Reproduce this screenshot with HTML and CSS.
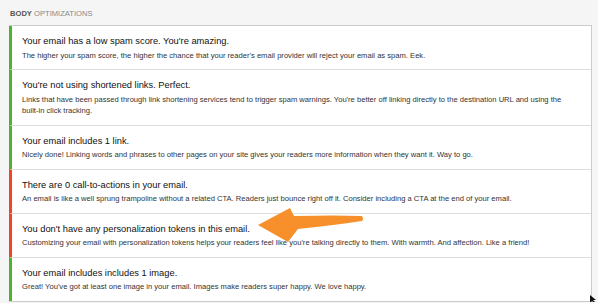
FILE: index.html
```html
<!DOCTYPE html>
<html lang="en">
<head>
  <meta charset="UTF-8" />
  <title>Body Optimizations</title>
  <link rel="stylesheet" href="styles.css">
</head>
<body>
  <div class="page">
    <h3 class="section-title"><strong>Body</strong> Optimizations</h3>

    <div class="checks">
      <div class="check good">
        <div class="check-title">Your email has a low spam score. You're amazing.</div>
        <div class="check-desc">The higher your spam score, the higher the chance that your reader's email provider will reject your email as spam. Eek.</div>
      </div>

      <div class="check good">
        <div class="check-title">You're not using shortened links. Perfect.</div>
        <div class="check-desc">Links that have been passed through link shortening services tend to trigger spam warnings. You're better off linking directly to the destination URL and using the built-in click tracking.</div>
      </div>

      <div class="check good">
        <div class="check-title">Your email includes 1 link.</div>
        <div class="check-desc">Nicely done! Linking words and phrases to other pages on your site gives your readers more information when they want it. Way to go.</div>
      </div>

      <div class="check bad">
        <div class="check-title">There are 0 call-to-actions in your email.</div>
        <div class="check-desc">An email is like a well sprung trampoline without a related CTA. Readers just bounce right off it. Consider including a CTA at the end of your email.</div>
      </div>

      <div class="check bad">
        <div class="check-title">You don't have any personalization tokens in this email.</div>
        <div class="check-desc">Customizing your email with personalization tokens helps your readers feel like you're talking directly to them. With warmth. And affection. Like a friend!</div>
      </div>

      <div class="check good">
        <div class="check-title">Your email includes includes 1 image.</div>
        <div class="check-desc">Great! You've got at least one image in your email. Images make readers super happy. We love happy.</div>
      </div>
    </div>

    <!-- annotation arrow drawn over the list -->
    <svg class="arrow" width="120" height="50" viewBox="0 0 120 50">
      <path d="M2 25 L34 8 L38 16 Q80 15 106 16 Q108 19 106 21 Q80 25 42 29 L32 42 Z" fill="#f7902a" />
    </svg>

    <svg class="cursor" width="8" height="8" viewBox="0 0 8 8">
      <path d="M0 0 L0 8 L2 6 L4 8 L5 7 L3 5 L6 5 Z" fill="#111" />
    </svg>
  </div>
</body>
</html>
```

FILE: styles.css
```css
* { box-sizing: border-box; }

body {
  margin: 0;
  background: #f5f5f5;
  font-family: "Liberation Sans", Arial, sans-serif;
  color: #222;
}

.page {
  position: relative;
  padding: 8px 6px 0 9px;
}

.section-title {
  margin: 0 0 6px 1px;
  font-size: 7.6px;
  line-height: 11px;
  font-weight: normal;
  text-transform: uppercase;
  color: #888;
}

.section-title strong {
  color: #555;
  font-weight: bold;
}

.checks {
  background: #fff;
  border: 1px solid #ccc;
  border-left: none;
}

.check {
  padding: 9px 12px 8px 10px;
  border-left: 3px solid #4fb22b;
  border-top: 1px solid #ddd;
}

.check:first-child { border-top: none; }

.check.bad { border-left-color: #ec4527; }

.check-title {
  font-size: 9.3px;
  line-height: 13px;
  color: #111;
  margin-bottom: 1.5px;
}

.check-desc {
  font-size: 7.6px;
  line-height: 11.5px;
  color: #333;
}

.arrow {
  position: absolute;
  left: 256px;
  top: 200px;
}

.cursor {
  position: absolute;
  left: 590px;
  top: 295px;
}
```
